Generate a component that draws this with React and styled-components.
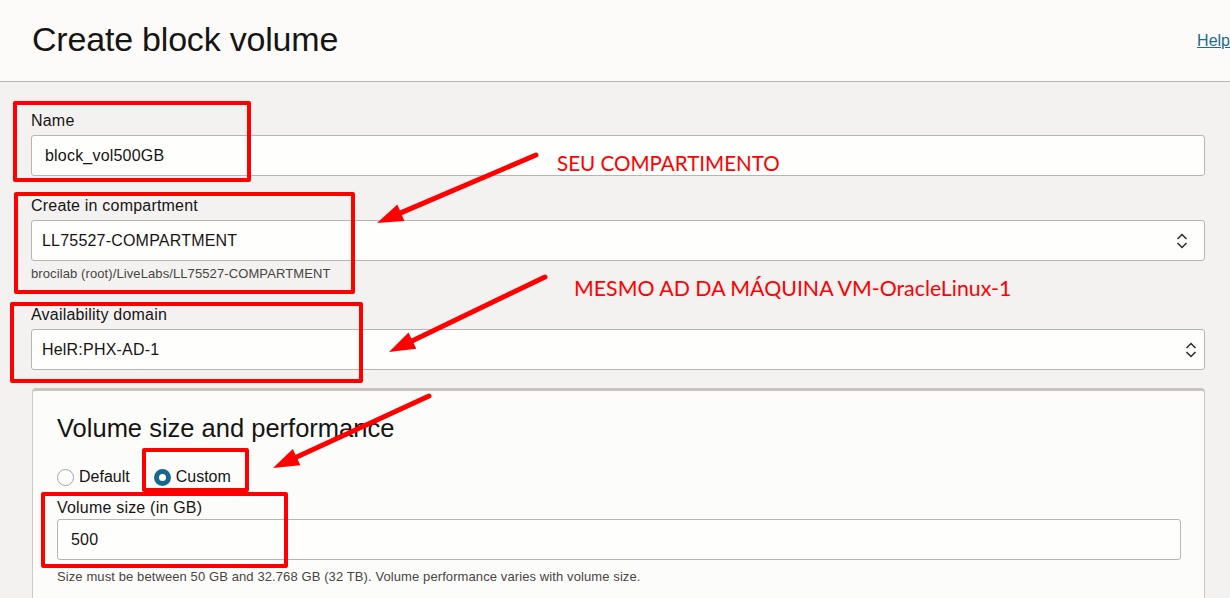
import React from "react"
import styled, { createGlobalStyle } from "styled-components"

const GlobalStyle = createGlobalStyle`
  html, body {
    margin: 0;
    padding: 0;
    background: #f3f2f1;
    font-family: "Liberation Sans", Arial, sans-serif;
    color: #161513;
  }
`

const Page = styled.div`
  position: relative;
  width: 1230px;
  height: 598px;
  overflow: hidden;
`

const Header = styled.header`
  display: flex;
  align-items: center;
  height: 81px;
  padding-left: 32px;
  background: #fcfbfa;
  border-bottom: 1px solid #bcb6b0;
`

const Title = styled.h1`
  margin: 0 0 2px 0;
  font-size: 34px;
  font-weight: 400;
  letter-spacing: -0.2px;
  color: #161513;
`

const HelpLink = styled.a`
  margin-left: auto;
  font-size: 16px;
  color: #1a6a91;
  text-decoration: underline;
  cursor: pointer;
`

const Form = styled.div`
  padding: 29px 25px 0 31px;
`

const Field = styled.div`
  margin-bottom: ${(p) => p.$gap || 20}px;
`

const Label = styled.div`
  font-size: 16px;
  line-height: 18px;
  letter-spacing: 0.2px;
  padding-top: 1px;
  margin-bottom: ${(p) => (p.$mb === undefined ? 5 : p.$mb)}px;
`

const Input = styled.div`
  box-sizing: border-box;
  height: ${(p) => p.$h || 41}px;
  display: flex;
  align-items: center;
  padding: 0 ${(p) => p.$pr || 16}px 0 ${(p) => p.$pl || 13}px;
  background: #fefefd;
  border: 1px solid #b9b4ae;
  border-radius: 3px;
  font-size: 16px;
  letter-spacing: 0.2px;
`

const Value = styled.span`
  flex: 1;
`

const Hint = styled.div`
  font-size: 13px;
  line-height: 18px;
  letter-spacing: 0.1px;
  color: #48453f;
  margin-top: ${(p) => p.$mt || 4}px;
`

const Panel = styled.section`
  margin-left: 1px;
  background: #fcfcfb;
  border: 1px solid #cdc8c2;
  border-top: 3px solid #c9c3bc;
  border-radius: 4px 4px 0 0;
  padding: 23px 23px 20px 24px;
`

const PanelTitle = styled.h2`
  margin: 0;
  font-size: 25.5px;
  line-height: 28px;
  font-weight: 400;
  color: #161513;
`

const RadioRow = styled.div`
  display: flex;
  align-items: center;
  gap: 24px;
  margin-top: 25px;
  height: 20px;
`

const RadioOption = styled.label`
  display: flex;
  align-items: center;
  gap: 5px;
  font-size: 16px;
`

const RadioDot = styled.span`
  box-sizing: border-box;
  width: 17px;
  height: 17px;
  border-radius: 50%;
  border: ${(p) => (p.$on ? "5px solid #17698b" : "1px solid #a8a29c")};
  background: #fff;
`

const VolumeField = styled.div`
  margin-top: 11px;
`

const Annotation = styled.div`
  position: absolute;
  box-sizing: border-box;
  left: ${(p) => p.$x}px;
  top: ${(p) => p.$y}px;
  width: ${(p) => p.$w}px;
  height: ${(p) => p.$h}px;
  border: 4px solid #ff0000;
  border-radius: 2px;
  pointer-events: none;
`

const Note = styled.div`
  position: absolute;
  left: ${(p) => p.$x}px;
  top: ${(p) => p.$y}px;
  font-family: Lato, "Open Sans", sans-serif;
  font-size: 21px;
  line-height: 24px;
  color: #ff0000;
  white-space: nowrap;
  transform-origin: left center;
  transform: scaleX(${(p) => p.$sx || 1});
`

const Overlay = styled.svg`
  position: absolute;
  left: 0;
  top: 0;
  pointer-events: none;
`

const Chevrons = () => (
  <svg width="12" height="18" viewBox="0 0 12 18" fill="none">
    <path d="M1.5 7 L6 2.5 L10.5 7" stroke="#2b2926" strokeWidth="1.5" />
    <path d="M1.5 11 L6 15.5 L10.5 11" stroke="#2b2926" strokeWidth="1.5" />
  </svg>
)

const arrows = [
  { from: [536, 155], to: [377, 223] },
  { from: [545, 277], to: [389, 352] },
  { from: [429, 396], to: [273, 468] },
]

const Arrow = ({ from, to }) => {
  const dx = to[0] - from[0]
  const dy = to[1] - from[1]
  const len = Math.hypot(dx, dy)
  const ux = dx / len
  const uy = dy / len
  const headLen = 26
  const half = 9
  const bx = to[0] - ux * headLen
  const by = to[1] - uy * headLen
  const pts = [
    `${to[0]},${to[1]}`,
    `${bx - uy * half},${by + ux * half}`,
    `${bx + uy * half},${by - ux * half}`,
  ].join(" ")
  return (
    <g>
      <line
        x1={from[0]}
        y1={from[1]}
        x2={bx + ux * 4}
        y2={by + uy * 4}
        stroke="#ff0000"
        strokeWidth="5"
        strokeLinecap="round"
      />
      <polygon points={pts} fill="#ff0000" />
    </g>
  )
}

const boxes = [
  { x: 13, y: 101, w: 238, h: 81 },
  { x: 14, y: 192, w: 341, h: 102 },
  { x: 10, y: 302, w: 353, h: 81 },
  { x: 142, y: 448, w: 107, h: 44 },
  { x: 41, y: 492, w: 247, h: 76 },
]

const App = () => {
  return (
    <Page>
      <GlobalStyle />
      <Header>
        <Title>Create block volume</Title>
        <HelpLink>Help</HelpLink>
      </Header>
      <Form>
        <Field>
          <Label>Name</Label>
          <Input $pl={13}>
            <Value>block_vol500GB</Value>
          </Input>
        </Field>
        <Field $gap={22}>
          <Label>Create in compartment</Label>
          <Input $pl={10} $pr={16}>
            <Value>LL75527-COMPARTMENT</Value>
            <Chevrons />
          </Input>
          <Hint>brocilab (root)/LiveLabs/LL75527-COMPARTMENT</Hint>
        </Field>
        <Field $gap={18}>
          <Label>Availability domain</Label>
          <Input $pl={10} $pr={7}>
            <Value>HelR:PHX-AD-1</Value>
            <Chevrons />
          </Input>
        </Field>
        <Panel>
          <PanelTitle>Volume size and performance</PanelTitle>
          <RadioRow>
            <RadioOption>
              <RadioDot />
              Default
            </RadioOption>
            <RadioOption>
              <RadioDot $on />
              Custom
            </RadioOption>
          </RadioRow>
          <VolumeField>
            <Label $mb={2}>Volume size (in GB)</Label>
            <Input $pl={13}>
              <Value>500</Value>
            </Input>
            <Hint $mt={8}>
              Size must be between 50 GB and 32.768 GB (32 TB). Volume
              performance varies with volume size.
            </Hint>
          </VolumeField>
        </Panel>
      </Form>

      {boxes.map((b, i) => (
        <Annotation key={i} $x={b.x} $y={b.y} $w={b.w} $h={b.h} />
      ))}
      <Overlay width="1230" height="598">
        {arrows.map((a, i) => (
          <Arrow key={i} from={a.from} to={a.to} />
        ))}
      </Overlay>
      <Note $x={557} $y={151} $sx={0.98}>
        SEU COMPARTIMENTO
      </Note>
      <Note $x={574} $y={276} $sx={1.015}>
        MESMO AD DA MÁQUINA VM-OracleLinux-1
      </Note>
    </Page>
  )
}

export default App
